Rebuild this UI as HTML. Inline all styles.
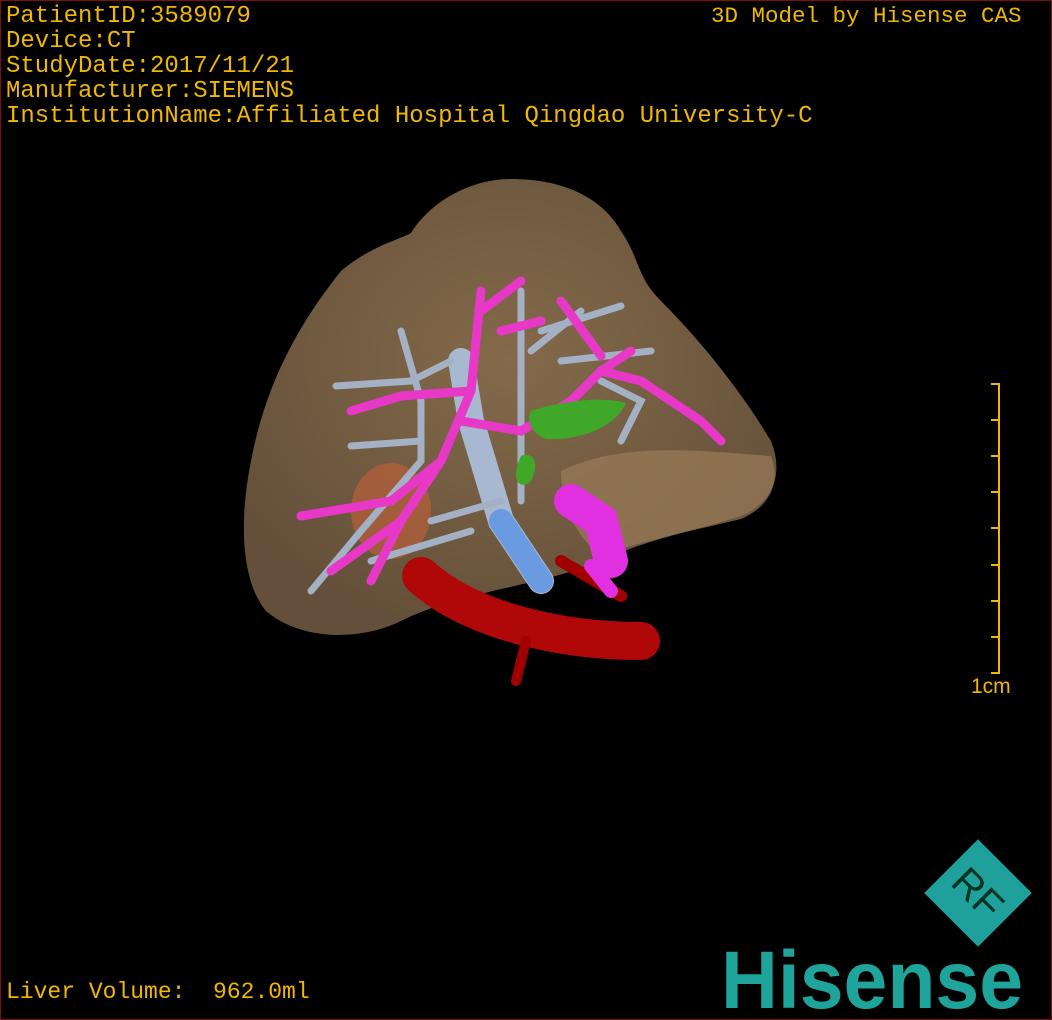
<!DOCTYPE html>
<html><head><meta charset="utf-8"><style>
html,body{margin:0;padding:0;background:#000}
#w{position:relative;width:1050px;height:1018px;border:1px solid #7a1010;background:#000;overflow:hidden;font-family:"Liberation Mono","DejaVu Sans Mono",monospace}
.t{position:absolute;color:#f0b800;font-size:24px;line-height:25px;white-space:pre}
</style></head><body><div id="w">
<div class="t" style="left:5px;top:3px">PatientID:3589079
Device:CT
StudyDate:2017/11/21
Manufacturer:SIEMENS
InstitutionName:Affiliated Hospital Qingdao University-C</div>
<div class="t" style="left:710px;top:3px;font-size:22.5px">3D Model by Hisense CAS</div>
<div class="t" style="left:5px;top:979px;font-size:23px">Liver Volume:  962.0ml</div>
<div class="t" style="left:970px;top:673px;font-family:'Liberation Sans',sans-serif;font-size:21px">1cm</div>
<svg width="1050" height="1018" style="position:absolute;left:0;top:0">
<g stroke="#f0b800" stroke-width="2" fill="none">
<line x1="998" y1="382" x2="998" y2="673"/>
<line x1="990" y1="383" x2="998" y2="383"/><line x1="990" y1="419" x2="998" y2="419"/><line x1="990" y1="455" x2="998" y2="455"/><line x1="990" y1="491" x2="998" y2="491"/><line x1="990" y1="527" x2="998" y2="527"/><line x1="990" y1="564" x2="998" y2="564"/><line x1="990" y1="600" x2="998" y2="600"/><line x1="990" y1="636" x2="998" y2="636"/><line x1="990" y1="672" x2="998" y2="672"/>
</g>
<defs><radialGradient id="lg" cx="0.5" cy="0.4" r="0.6"><stop offset="0" stop-color="#846a4a"/><stop offset="1" stop-color="#64503a"/></radialGradient></defs>
<path d="M410,232 C430,200 470,178 510,178 C560,178 600,195 620,230 C640,260 635,275 660,300 C700,340 740,390 770,440 C782,470 775,500 740,515 C700,528 640,540 600,560 C540,585 460,590 400,620 C360,640 300,640 265,610 C240,580 238,520 250,460 C265,380 300,320 340,270 C370,245 395,240 410,232 Z" fill="url(#lg)"/>
<path d="M560,470 C620,440 700,450 770,455 C780,480 770,505 740,518 C690,530 640,540 600,555 C580,540 560,510 560,470Z" fill="#9a7c58" opacity="0.7"/>
<ellipse cx="390" cy="510" rx="40" ry="48" fill="#b8603a" opacity="0.7"/>
<g fill="none" stroke-linecap="round">
<path d="M420,575 C470,620 560,640 640,640" stroke="#b00808" stroke-width="38"/>
<path d="M525,640 L515,680" stroke="#a00000" stroke-width="10"/>
<path d="M560,560 L620,595" stroke="#a00000" stroke-width="12"/>
<path d="M460,360 L470,420 L500,520 L540,580" stroke="#a8b8d0" stroke-width="26"/>
<path d="M500,520 L540,580" stroke="#6a9ae0" stroke-width="24"/>
<g stroke="#a4b0c4" stroke-width="7">
<path d="M400,330 L420,400 L420,460 L360,530 L310,590"/>
<path d="M335,385 L410,380 L450,360"/><path d="M350,445 L420,440"/>
<path d="M520,290 L520,380 L520,440 L520,500"/>
<path d="M530,350 L580,310"/><path d="M540,330 L620,305"/><path d="M560,360 L650,350"/>
<path d="M600,380 L640,400 L620,440"/><path d="M370,560 L470,530"/><path d="M430,520 L500,500"/>
</g>
<g stroke="#e838c8" stroke-width="9">
<path d="M480,290 L470,390 L440,460 L400,520 L330,570"/>
<path d="M470,390 L400,395 L350,410"/><path d="M460,420 L520,430 L570,400 L600,370 L630,350"/>
<path d="M600,370 L640,380 L700,420 L720,440"/><path d="M480,310 L520,280"/>
<path d="M440,460 L390,500 L300,515"/><path d="M400,520 L370,580"/>
<path d="M600,355 L560,300"/><path d="M500,330 L540,320"/>
</g>
<path d="M570,500 L600,520 L610,560" stroke="#e030e0" stroke-width="34"/>
<path d="M590,565 L610,590" stroke="#e030e0" stroke-width="14"/>
</g>
<path d="M530,410 C560,400 600,395 625,402 C615,425 580,440 545,438 C530,432 525,420 530,410Z" fill="#40a828"/>
<path d="M520,455 C530,450 540,460 530,480 C520,490 508,480 520,455Z" fill="#40a828"/>
<g transform="translate(977,892) rotate(45)">
<rect x="-38" y="-38" width="76" height="76" fill="#20a09a"/>
</g>
<text x="977" y="906" fill="#032" font-family="Liberation Sans,sans-serif" font-size="40" text-anchor="middle" transform="rotate(45 977 892)">RF</text>
<text x="720" y="1007" fill="#1ea49a" font-family="Liberation Sans,sans-serif" font-weight="bold" font-size="82" textLength="302" lengthAdjust="spacingAndGlyphs">Hisense</text>
</svg>
</div></body></html>
